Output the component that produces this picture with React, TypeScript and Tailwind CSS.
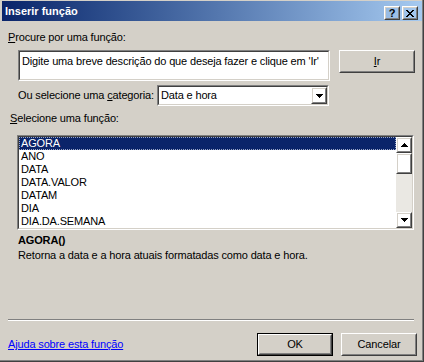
import React from "react";

const items = ["AGORA", "ANO", "DATA", "DATA.VALOR", "DATAM", "DIA", "DIA.DA.SEMANA"];

function Raised({ className = "", children }: { className?: string; children?: React.ReactNode }) {
    return (
        <div className={"border border-t-white border-l-white border-r-[#404040] border-b-[#404040] " + className}>
            <div className="w-full h-full border border-t-[#D4D0C8] border-l-[#D4D0C8] border-r-[#808080] border-b-[#808080] flex items-center justify-center">
                {children}
            </div>
        </div>
    );
}

function Sunken({ className = "", children }: { className?: string; children?: React.ReactNode }) {
    return (
        <div className={"border border-t-[#808080] border-l-[#808080] border-r-white border-b-white " + className}>
            <div className="w-full h-full border border-t-[#404040] border-l-[#404040] border-r-[#D4D0C8] border-b-[#D4D0C8] bg-white flex">
                {children}
            </div>
        </div>
    );
}

function Arrow({ up }: { up?: boolean }) {
    // classic 7x4 pixel triangle
    const rows = up ? [3, 2, 1, 0] : [0, 1, 2, 3];
    return (
        <svg width="7" height="4" viewBox="0 0 7 4" shapeRendering="crispEdges">
            {rows.map((inset, y) => (
                <rect key={y} x={inset} y={y} width={7 - inset * 2} height={1} fill="#000" />
            ))}
        </svg>
    );
}

export default function App() {
    return (
        <div className="w-[424px] h-[362px] bg-[#D4D0C8] text-black text-[11px] leading-[13px] tracking-[-0.15px] whitespace-nowrap font-['Liberation_Sans',Arial,sans-serif] pl-[2px] pr-[2px] pb-[2px] pt-[1px] flex flex-col shadow-[inset_-1px_-1px_#404040,inset_-2px_-2px_#808080]">
            {/* title bar */}
            <div className="h-[20px] flex items-start bg-gradient-to-r from-[#0A246A] to-[#A6CAF0]">
                <span className="text-white font-bold ml-[3px] mt-[4px] leading-[13px] tracking-normal">Inserir função</span>
                <div className="ml-auto mt-[5px] mr-[4px] flex gap-[1px]">
                    <Raised className="w-[16px] h-[14px]">
                        <span className="font-bold text-[11px] leading-[10px]">?</span>
                    </Raised>
                    <Raised className="w-[16px] h-[14px] ml-[1px]">
                        <svg width="8" height="7" viewBox="0 0 8 7" shapeRendering="crispEdges">
                            <path d="M0 0h2v1H0zM6 0h2v1H6zM1 1h2v1H1zM5 1h2v1H5zM2 2h4v1H2zM3 3h2v1H3zM2 4h4v1H2zM1 5h2v1H1zM5 5h2v1H5zM0 6h2v1H0zM6 6h2v1H6z" fill="#000" />
                        </svg>
                    </Raised>
                </div>
            </div>

            <div className="mt-[10px] ml-[6px]">
                <span className="underline">P</span>rocure por uma função:
            </div>

            <div className="mt-[6px] ml-[16px] flex items-start">
                <Sunken className="w-[312px] h-[31px]">
                    <div className="pl-[2px] pt-[3px]">Digite uma breve descrição do que deseja fazer e clique em 'Ir'</div>
                </Sunken>
                <Raised className="w-[76px] h-[23px] ml-[9px]">
                    <span><span className="underline">I</span>r</span>
                </Raised>
            </div>

            <div className="mt-[4px] ml-[16px] flex items-center h-[21px]">
                <div className="w-[139px]">
                    Ou selecione uma <span className="underline">c</span>ategoria:
                </div>
                <Sunken className="w-[172px] h-[21px]">
                    <div className="flex-1 pl-[2px] flex items-center">Data e hora</div>
                    <Raised className="w-[16px] h-[17px]">
                        <Arrow />
                    </Raised>
                </Sunken>
            </div>

            <div className="mt-[6px] ml-[8px]">
                <span className="underline">S</span>elecione uma função:
            </div>

            <Sunken className="mt-[10px] ml-[15px] w-[397px] h-[95px]">
                <div className="flex-1 flex flex-col">
                    {items.map((it, i) =>
                        i === 0 ? (
                            <div key={it} className="h-[13px] leading-[11px] pl-[1px] bg-[#0A246A] text-white border border-dotted border-[#9aa6c6]">
                                {it}
                            </div>
                        ) : (
                            <div key={it} className="h-[13px] pl-[2px]">
                                {it}
                            </div>
                        )
                    )}
                </div>
                <div className="w-[16px] flex flex-col">
                    <Raised className="h-[16px]">
                        <Arrow up />
                    </Raised>
                    <Raised className="h-[21px]" />
                    <div className="flex-1 bg-[#eae8e3]" />
                    <Raised className="h-[16px]">
                        <Arrow />
                    </Raised>
                </div>
            </Sunken>

            <div className="mt-[4px] ml-[16px] font-bold">AGORA()</div>
            <div className="mt-[2px] ml-[16px]">Retorna a data e a hora atuais formatadas como data e hora.</div>

            <div className="flex-1" />

            <div className="ml-[6px] w-[406px] border-t border-t-[#808080] border-b border-b-white" />

            <div className="mt-[12px] mb-[4px] flex items-center h-[23px]">
                <a className="ml-[6px] text-[#0000FF] underline" href="#">Ajuda sobre esta função</a>
                <div className="ml-auto mr-[5px] flex">
                    <div className="border border-black">
                        <Raised className="w-[74px] h-[21px]">OK</Raised>
                    </div>
                    <Raised className="w-[76px] h-[23px] ml-[8px]">Cancelar</Raised>
                </div>
            </div>
        </div>
    );
}
